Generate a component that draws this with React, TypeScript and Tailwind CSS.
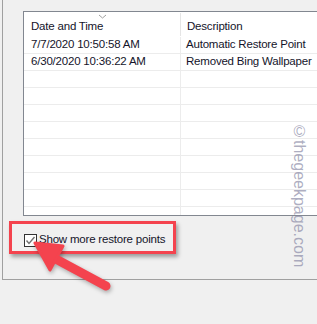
import React from 'react';

const font = { fontFamily: '"Liberation Sans", Arial, sans-serif' };

const rows = [
  { date: '7/7/2020 10:50:58 AM', desc: 'Automatic Restore Point' },
  { date: '6/30/2020 10:36:22 AM', desc: 'Removed Bing Wallpaper' },
];

const App = () => {
  const filled = [...rows, ...Array.from({ length: 8 }, () => ({ date: '', desc: '' }))];

  return (
    <div
      className="relative w-[317px] h-[324px] overflow-hidden bg-[#f0f0f0] text-[11.5px] tracking-[-0.2px] text-[#14142a]"
      style={font}
    >
      {/* Restore point list + checkbox */}
      <div className="h-[280px] ml-[2px] border-l border-b border-[#a0a0a0] pt-[11px]">
        <div className="ml-[20px] w-[320px] h-[205px] border border-r-0 border-[#828790] bg-white overflow-hidden">
          {/* Header */}
          <div className="relative flex h-[25px] leading-none">
            <div className="w-[156px] pl-[7px] pt-[9px]">Date and Time</div>
            <div className="w-px my-[1px] h-[23px] bg-[#e5e5e5]" />
            <div className="flex-1 pl-[6px] pt-[9px]">Description</div>
            <svg className="absolute left-[74px] top-[2px]" width="9" height="5" viewBox="0 0 9 5">
              <polyline points="1,1 4.5,4 8,1" fill="none" stroke="#a0a0a0" strokeWidth="1" />
            </svg>
          </div>
          {/* Rows */}
          {filled.map((r, i) => (
            <div key={i} className="flex h-[17px] border-b border-[#ececec]">
              <div className="w-[157px] pl-[7px] border-r border-[#ececec] flex items-center leading-none">
                {r.date}
              </div>
              <div className="flex-1 pl-[5px] flex items-center leading-none">{r.desc}</div>
            </div>
          ))}
          <div className="flex h-full">
            <div className="w-[157px] border-r border-[#ececec]" />
          </div>
        </div>

        {/* Highlighted checkbox */}
        <div className="mt-[5px] ml-[6px] w-[167px] h-[33px] border-[3px] border-[#f4434e] shadow-[2px_3px_4px_rgba(0,0,0,0.35)]">
          <div className="flex items-center gap-[2px] pl-[12px] pt-[5px] h-full">
            <div className="w-[13px] h-[13px] border border-[#333333] bg-white flex items-center justify-center">
              <svg width="11" height="11" viewBox="0 0 11 11">
                <polyline points="1.5,5.5 4,8.5 9.5,2" fill="none" stroke="#707070" strokeWidth="1.4" />
              </svg>
            </div>
            <span>Show more restore points</span>
          </div>
        </div>
      </div>

      {/* Annotation arrow */}
      <svg
        className="absolute left-0 top-0 pointer-events-none"
        width="317"
        height="324"
        viewBox="0 0 317 324"
        style={{ filter: 'drop-shadow(1px 2px 2px rgba(0,0,0,0.3))' }}
      >
        <line x1="106" y1="286" x2="54" y2="258" stroke="#f4434e" strokeWidth="9" strokeLinecap="round" />
        <polygon
          points="35,243 63,246 50,270"
          fill="#f4434e"
          stroke="#f4434e"
          strokeWidth="3"
          strokeLinejoin="round"
        />
      </svg>

      {/* Watermark */}
      <div
        className="absolute left-[291px] top-[123px] text-[16px] tracking-normal leading-none text-[#8a8aa6]/70 [writing-mode:vertical-rl]"
        style={font}
      >
        ©thegeekpage.com
      </div>
    </div>
  );
};

export default App;
